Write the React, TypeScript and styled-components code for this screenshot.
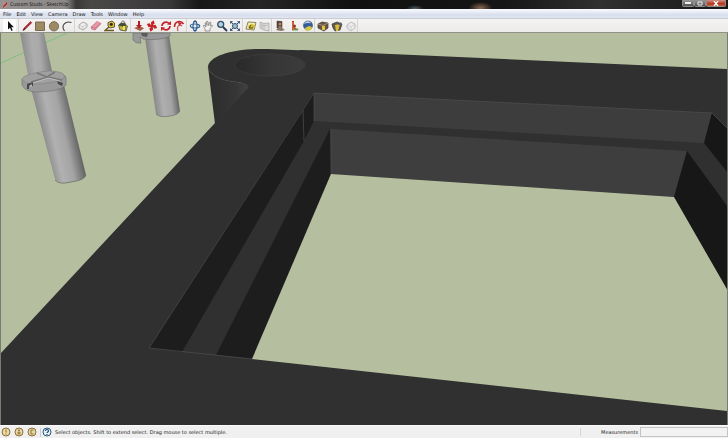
import React from "react";
import styled, { createGlobalStyle } from "styled-components";

const GlobalStyle = createGlobalStyle`
  html, body, #root { height: 100%; margin: 0; }
  body { overflow: hidden; }
  * { box-sizing: border-box; }
`;

const Window = styled.div`
  display: flex;
  flex-direction: column;
  height: 100vh;
  background: #f0f0f0;
  color: #222;
  font: 5px/8px "DejaVu Sans", "Noto Sans", sans-serif;
`;

const TitleBar = styled.header`
  display: flex;
  justify-content: space-between;
  align-items: flex-start;
  flex: 0 0 9px;
  padding-right: 2px;
  background:
    radial-gradient(ellipse 12px 6px at 66% 8px, #8a6650, transparent),
    radial-gradient(ellipse 9px 4px at 57% 9px, #53646e, transparent),
    linear-gradient(90deg, #969292 0, #8c8888 66px, #3a3838 76px, #4a4747 90px, #393838 170px, #171717 200px, #252525 260px, #111 350px, #151515 500px, #303030 600px, #171717 100%);
`;

const TitleText = styled.h1`
  display: flex;
  align-items: center;
  gap: 2px;
  margin: 0;
  padding-left: 2px;
  color: #141414;
  font-family: "Open Sans", sans-serif;
  font-size: 5px;
  font-weight: 400;
  line-height: 9px;
`;

const WindowButtons = styled.div`
  display: flex;
`;

const WindowButton = styled.button<{ $close?: boolean }>`
  display: grid;
  place-items: center;
  width: ${(p) => (p.$close ? 20 : 12)}px;
  height: 7px;
  padding: 0;
  border: 1px solid #8d8d8d;
  border-top: 0;
  border-radius: 0 0 2px 2px;
  background: ${(p) => (p.$close ? "linear-gradient(#cf9183, #b63720 60%, #cb5e43)" : "linear-gradient(#999, #505050)")};
`;

const MenuBar = styled.nav`
  display: flex;
  align-items: center;
  flex: 0 0 10px;
  gap: 5px;
  padding-left: 3px;
  border-top: 1px solid #f8f9fc;
  border-bottom: 1px solid #c9cbd3;
  background: linear-gradient(#f4f6fb, #d8deed 60%, #e0e5f0);
`;

const MenuItem = styled.button`
  padding: 0;
  border: 0;
  background: none;
  color: #111;
  font: inherit;
`;

const Toolbar = styled.div`
  display: flex;
  align-items: center;
  flex: 0 0 14px;
  padding-left: 3px;
  background: linear-gradient(#f4f3f2, #ecebea);
  border-bottom: 1px solid #91918a;
`;

const ToolGroup = styled.div<{ $width: number }>`
  display: flex;
  justify-content: space-between;
  width: ${(p) => p.$width}px;
  margin-right: 2px;
  box-shadow: 1px 0 #d4d4d2;
`;

const ToolButton = styled.button<{ $active?: boolean }>`
  display: grid;
  place-items: center;
  width: 13px;
  height: 13px;
  padding: 0;
  border: 0;
  background: ${(p) => (p.$active ? "#fdfdfd" : "none")};
`;

const Icon = styled.svg`
  display: block;
  width: 12px;
  height: 12px;
`;

const Viewport = styled.main`
  flex: 1 1 0;
  min-height: 0;
  border-right: 1px solid #777d70;
  border-left: 1px solid #777d70;
  background: #b5bf9f;
`;

const Scene = styled.svg`
  display: block;
  width: 100%;
  height: 100%;
`;

const StatusBar = styled.footer`
  display: flex;
  align-items: center;
  flex: 0 0 13px;
  gap: 3px;
  padding-left: 1px;
  border-top: 1px solid #fafafa;
  background: #f0f0f0;
`;

const StatusButton = styled.button`
  width: 10px;
  height: 10px;
  padding: 0;
  border: 0;
  background: none;

  svg { display: block; width: 10px; height: 10px; }
`;

const StatusDivider = styled.span`
  width: 1px;
  height: 9px;
  margin-right: -2px;
  background: #ccc;
`;

const StatusText = styled.span`
  flex: 1;
  border-right: 1px solid #d6d6d6;
  margin-right: 17px;
`;

const Measurements = styled.label`
  display: flex;
  align-items: center;
  gap: 2px;
`;

const MeasureInput = styled.input`
  width: 88px;
  height: 10px;
  padding: 0 2px;
  border: 1px solid #c4c4c4;
  background: #f2f2f2;
  font: inherit;
`;

type Tool = { name: string; art: React.ReactNode };

const toolGroups: { width: number; tools: Tool[] }[] = [
  { width: 15, tools: [{ name: "Select", art: <path d="M4 1v8.5l2-1.8 1.4 3.2 1.3-.6-1.4-3h2.5Z" fill="#111" /> }] },
  {
    width: 54,
    tools: [
      { name: "Line", art: <><path d="M2 10.5 3 8l6.5-6.5 1.3 1.2L4.2 9.3Z" fill="#b52332" stroke="#841822" strokeWidth=".5" /><path d="m1.5 11 1.6-2.8L4.4 9Z" fill="#35251f" /></> },
      { name: "Rectangle", art: <path d="M1.5 2h9v8.5h-9Z" fill="#9c8b62" stroke="#7b6c50" /> },
      { name: "Circle", art: <circle cx="6" cy="6.3" r="4.6" fill="#9c8b62" stroke="#7b6c50" /> },
      { name: "Arc", art: <path d="M3.5 11C-.5 5.500 4.500.5 10.500 2.500" fill="none" stroke="#444" strokeWidth="1.1" /> },
    ],
  },
  {
    width: 54,
    tools: [
      { name: "Make Component", art: <><path d="m2 5 4-3 4 2v3L6 10 2 8Z" fill="#ededed" stroke="#aaa" /><path d="m2 5 4 2 4-3M6 7v3" fill="none" stroke="#b5b5b5" strokeWidth=".6" /></> },
      { name: "Eraser", art: <><path d="m1 7 6-5.500 4 2L5 10 1.500 9Z" fill="#e697a6" stroke="#c57688" strokeWidth=".7" /><path d="m1 7 4 1.300L11 3.500M5 8.300V10" stroke="#b96479" fill="none" strokeWidth=".6" /></> },
      { name: "Tape Measure", art: <><path d="M4 2.500 8 1l2.500 2v4L6 8 4 6Z" fill="#e0c438" stroke="#403b2c" strokeWidth=".8" /><circle cx="7.300" cy="4.300" r="1.600" fill="#312f2b" /><path d="m5 7-4 3.500h9" fill="none" stroke="#6c5b20" strokeWidth="1.500" /></> },
      { name: "Paint Bucket", art: <><path d="m1.500 5 5-2 4 3-1.500 5-6-1Z" fill="#c2ba42" stroke="#514e2b" strokeWidth=".8" /><ellipse cx="5.500" cy="4.800" rx="3.500" ry="1.700" fill="#454e32" /><path d="M4 4c0-4 4-4 4 0m0 2v4" fill="none" stroke="#454545" strokeWidth=".8" /><path d="M6 6h2v4H6Z" fill="#efe260" /></> },
    ],
  },
  {
    width: 54,
    tools: [
      { name: "Push/Pull", art: <><path d="m1 8 3-1h5l2 1.500L7 11Z" fill="#a56148" /><path d="M5 1h2v4h2L6 8.500 3 5h2Z" fill="#b41d22" /></> },
      { name: "Move", art: <path d="m6 0 2 3-1 1v1l2-1 2.500 2.500L9 8 8 7H7l1 2-2 3-2-3 1-1V7L3 8 .500 5.500 3 4l1 1h1L4 3Z" fill="#c52226" transform="rotate(15 6 6)" /> },
      { name: "Rotate", art: <><path d="M2 6a4 4 0 0 1 7-2.500M10 6a4 4 0 0 1-7 2.500" fill="none" stroke="#c52327" strokeWidth="1.700" /><path d="m7 4.500 4 .5V1ZM5 7.500 1 7v4Z" fill="#c52327" /></> },
      { name: "Offset", art: <><path d="M1.500 7C1.500 1 8 0 10.500 4" fill="none" stroke="#bb2428" strokeWidth="1.600" /><path d="M5 11c-2-5 2-7 4-5" fill="none" stroke="#c75d53" strokeWidth="1.200" /><path d="m5 2 4 1-3 3Z" fill="#c52226" /></> },
    ],
  },
  {
    width: 54,
    tools: [
      { name: "Orbit", art: <><ellipse cx="6" cy="6" rx="4.700" ry="2" fill="none" stroke="#326992" strokeWidth="1.200" /><ellipse cx="6" cy="6" rx="2" ry="4.700" fill="none" stroke="#315e9b" strokeWidth="1.200" /><path d="m6 0 2 2H4Zm0 12 2-2H4Z" fill="#245790" /></> },
      { name: "Pan", art: <path d="M3 11C4 8 0 6 2 5l2 2-1-4 1-.5 1 3-.3-4h1.300l.5 4L8 2l1 .5L8 6l2-1 .5 1L8 8.500V11Z" fill="#f5f0e9" stroke="#777" strokeWidth=".7" /> },
      { name: "Zoom", art: <><circle cx="4.700" cy="4.300" r="3" fill="#afd0dc" stroke="#334f69" strokeWidth="1.300" /><path d="m7 7 4 4" stroke="#26364a" strokeWidth="1.800" /></> },
      { name: "Zoom Extents", art: <><circle cx="6" cy="6" r="2.500" fill="#9dbccc" stroke="#36546d" /><path d="m1 1 3 .5L1.500 4ZM11 1l-3 .5L10.500 4ZM1 11l3-.5L1.500 8ZM11 11l-3-.5L10.500 8Z" fill="#263f61" /><path d="m2 2 2 2m6-2L8 4M2 10l2-2m6 2L8 8" stroke="#345172" /></> },
    ],
  },
  {
    width: 27,
    tools: [
      { name: "Add Location", art: <><path d="m3 2 8 .5L9 10 1 9Z" fill="#f1edb0" stroke="#6f6b3f" strokeWidth=".8" /><path d="m3 6 3-2 4 1-1 3-4 2Z" fill="#d6ba23" /><path d="m6 5-2 3h4" fill="none" stroke="#494d42" /></> },
      { name: "Toggle Terrain", art: <><path d="m1 2 4 1.500 5-.5v8l-5-1-4-2Z" fill="#ddd" stroke="#aaa" strokeWidth=".8" /><path d="m2 5 3 1 4-1M5 4v6M3 3v6" stroke="#b2b2b2" strokeWidth=".7" fill="none" /></> },
    ],
  },
  {
    width: 41,
    tools: [
      { name: "Photo Textures", art: <><path d="m3 1 5 .5v7L3 8Z" fill="#574137" stroke="#333" strokeWidth=".5" /><circle cx="6" cy="4" r="1.500" fill="#b9855d" /><path d="M4 8c0-3 4-3 4 0l3 2-4 1-5-1Z" fill="#887563" /></> },
      { name: "Get Models", art: <><path d="M4 1h2v6l5 3H4Z" fill="#bd3b2d" /><path d="M5 2v7" stroke="#df8c4a" /><path d="m5 9 5-.5v2H4Z" fill="#6e9c4b" /><circle cx="6.500" cy="6" r="1.500" fill="#8a3b27" /></> },
      { name: "Preview in Google Earth", art: <><circle cx="6" cy="5.500" r="4.500" fill="#345b9e" stroke="#33435b" strokeWidth=".6" /><path d="M2 4c3-2 6 0 7-1L7 1.500C5 1 3 2 2 4Z" fill="#c0d4e7" /><path d="m3 8 4-2 3 1-1 3-5 1Z" fill="#d5c744" /></> },
    ],
  },
  {
    width: 41,
    tools: [
      { name: "Get 3D Models", art: <><path d="m1 4 4-2 6 1v5l-4 3-6-3Z" fill="#665447" stroke="#433c32" strokeWidth=".7" /><path d="m1 4 5 1.500L11 3" stroke="#ac9476" fill="none" /><path d="M5 6h3v4H5Z" fill="#e3c33e" /></> },
      { name: "Share Model", art: <><path d="m1 4 5-2 5 2-2 6-5 1-2-3Z" fill="#5f5849" stroke="#373a3e" strokeWidth=".7" /><path d="m4 5 5-1-2 7H5Z" fill="#dbbd39" /><path d="m7 5 3-3 1 3Z" fill="#54616c" /></> },
      { name: "Share Component", art: <><path d="m2 5 4-3 4 2v4l-4 3-4-3Z" fill="#ececec" stroke="#bbb" /><path d="m2 5 4 2 4-3M6 7v4" fill="none" stroke="#c2c2c2" strokeWidth=".6" /></> },
    ],
  },
];

const menus = ["File", "Edit", "View", "Camera", "Draw", "Tools", "Window", "Help"];

const statusMarks = [
  { name: "Geo-location", art: <path d="M5 2.500v3M5 6.500v1" stroke="#8c7136" strokeWidth="1" /> },
  { name: "Credits", art: <><circle cx="5" cy="3.500" r="1" fill="#8c7136" /><path d="M3.500 7.500V5h3v2.500Z" fill="#a6894b" /></> },
  { name: "Sign in", art: <path d="M6.500 3H4v4h2.500" fill="none" stroke="#8c7136" /> },
];

function ModelScene() {
  return (
    <Scene viewBox="1 33 726 392" preserveAspectRatio="xMidYMid slice" role="img" aria-label="Custom studs model">
      <defs>
        <linearGradient id="shaft" x1="0" y1=".15" x2="1" y2="0">
          <stop offset="0" stopColor="#898989" />
          <stop offset=".35" stopColor="#adadad" />
          <stop offset=".55" stopColor="#a9a9a9" />
          <stop offset="1" stopColor="#646464" />
        </linearGradient>
        <linearGradient id="lower-shaft" gradientUnits="userSpaceOnUse" x1="43" y1="135" x2="75" y2="128">
          <stop offset="0" stopColor="#8e8e8e" />
          <stop offset=".3" stopColor="#b1b1b1" />
          <stop offset=".65" stopColor="#a4a4a4" />
          <stop offset="1" stopColor="#656565" />
        </linearGradient>
        <linearGradient id="rear-shaft" gradientUnits="userSpaceOnUse" x1="151" y1="78" x2="175" y2="75">
          <stop offset="0" stopColor="#888" />
          <stop offset=".35" stopColor="#afafaf" />
          <stop offset=".7" stopColor="#a4a4a4" />
          <stop offset="1" stopColor="#696969" />
        </linearGradient>
        <linearGradient id="hole"><stop stopColor="#292929" /><stop offset=".55" stopColor="#373737" /><stop offset="1" stopColor="#3b3b3b" /></linearGradient>
        <linearGradient id="boss"><stop stopColor="#2b2b2b" /><stop offset=".7" stopColor="#363636" /><stop offset="1" stopColor="#414141" /></linearGradient>
      </defs>
      <path d="M1 63 67 33" stroke="#7fbd80" strokeWidth="1" />
      <path d="M20 33h24l9 43-24 4Z" fill="url(#shaft)" />
      <path d="M31 89 55 179q2 5 16 3 14-2 15-7L64 85Z" fill="url(#lower-shaft)" />
      <path d="M55 180q4 5 16 2 14-2 15-7" fill="none" stroke="#6b6b6b" strokeWidth=".8" />
      <path d="M22 79v6q3 7 15 7 21 0 29-7v-8l-3-3Z" fill="#999" stroke="#707070" strokeWidth=".6" />
      <path d="M22 80q-1-4 13-7 17-4 27 0 8 6-8 9-26 5-32-2Z" fill="#a0a0a0" stroke="#808080" strokeWidth=".6" />
      <path d="m31 82 17-5 14 3M37 73l10 4 8-5" fill="none" stroke="#777" strokeWidth="1.500" />
      <path d="m33 83 15-5 12 3" fill="none" stroke="#c3c3c3" strokeWidth=".8" />
      <path d="m27 84 6-2v4h-4v3h-2Zm30-3 6 2-1 3-4-2Z" fill="#484848" />
      <path d="m29 86 3-2v3Z" fill="#b8b8b8" />
      <path d="M145 38l11 76q4 4 14 2 8-1 10-5L169 35Z" fill="url(#rear-shaft)" />
      <path d="M156 114q4 4 14 2 8-1 10-5" fill="none" stroke="#777" strokeWidth=".8" />
      <path d="M133 33v7q3 4 8 3l-1-6 3 2q17 2 27-3v-3Z" fill="#999" stroke="#737373" strokeWidth=".7" />
      <path d="M141 33h7l-1 4-5-1Z" fill="#5b5b5b" />
      <path d="M1 353 215 123 250 82 300 50 728 69V425H1Z" fill="#303030" />
      <path d="M208 67c2 9 15 14 29 15 7 1 14 4 10 7L215 124Z" fill="url(#boss)" />
      <path d="M208 67c1-12 28-19 60-18l50 2-20 55-51-17c4-3-3-6-10-7-14-1-27-6-29-15Z" fill="#303030" />
      <path d="M208 67c2 9 15 14 29 15 7 1 14 4 10 7" fill="none" stroke="#444" strokeWidth=".6" />
      <ellipse cx="270" cy="65" rx="35" ry="11" fill="url(#hole)" stroke="#444" strokeWidth=".5" />
      <path d="M314 93 712 113 704 143 314 121Z" fill="#3d3d3d" />
      <path d="M312 95 149 348 182 352 304 141 314 121V93Z" fill="#1d1d1d" />
      <path d="M331 129 687 151 674 197 331 174Z" fill="#3e3e3e" />
      <path d="M330 129 216 355 252 359 331 174Z" fill="#1d1d1d" />
      <path d="M712 113 728 129V173L704 143Z" fill="#171717" />
      <path d="M687 151 728 207V291L674 197Z" fill="#171717" />
      <path d="M331 174 674 197 728 291V411L252 359Z" fill="#b5bf9f" />
      <path d="M149 348 314 93 712 113 728 129M149 348 252 359M304 141l-1-31m11-17v28m17 8v45" fill="none" stroke="#4f4f4f" strokeWidth=".7" />
    </Scene>
  );
}

export default function App() {
  return (
    <>
      <GlobalStyle />
      <Window>
        <TitleBar>
          <TitleText>
            <svg width="6" height="8" viewBox="0 0 6 8" aria-hidden="true"><path d="M1 1h4v6H1Z" fill="#b68c84" /><path d="m1 7 .5-2L5 1v2L2 6Z" fill="#a31820" /></svg>
            Custom Studs - SketchUp
          </TitleText>
          <WindowButtons>
            <WindowButton aria-label="Minimize"><svg width="6" height="4"><path d="M0 1h6v2H0Z" fill="#eee" /></svg></WindowButton>
            <WindowButton aria-label="Restore"><svg width="6" height="5"><path d="M1 1h4v3H1Z" fill="none" stroke="#eee" /></svg></WindowButton>
            <WindowButton $close aria-label="Close"><svg width="6" height="5"><path d="m1 0 4 5m0-5L1 5" stroke="#fff" strokeWidth="1.300" /></svg></WindowButton>
          </WindowButtons>
        </TitleBar>
        <MenuBar aria-label="Main menu">
          {menus.map((menu) => <MenuItem key={menu}>{menu}</MenuItem>)}
        </MenuBar>
        <Toolbar role="toolbar" aria-label="Getting started">
          {toolGroups.map((group) => (
            <ToolGroup key={group.tools[0].name} $width={group.width}>
              {group.tools.map((tool) => (
                <ToolButton key={tool.name} $active={tool.name === "Select"} aria-label={tool.name}>
                  <Icon viewBox="0 0 12 12" aria-hidden="true">{tool.art}</Icon>
                </ToolButton>
              ))}
            </ToolGroup>
          ))}
        </Toolbar>
        <Viewport><ModelScene /></Viewport>
        <StatusBar>
          {statusMarks.map((mark) => (
            <StatusButton key={mark.name} aria-label={mark.name}>
              <svg viewBox="0 0 10 10" aria-hidden="true"><circle cx="5" cy="5" r="4" fill="#e8d8a8" stroke="#8c7136" />{mark.art}</svg>
            </StatusButton>
          ))}
          <StatusDivider />
          <StatusButton aria-label="Help">
            <svg viewBox="0 0 10 10" aria-hidden="true"><circle cx="5" cy="5" r="4" fill="#e7f0f6" stroke="#28597e" /><path d="M3.500 4c0-2 3-2 3 0 0 1-1.500 1-1.500 2M5 7v1" fill="none" stroke="#17466b" strokeWidth="1.100" /></svg>
          </StatusButton>
          <StatusText>Select objects. Shift to extend select. Drag mouse to select multiple.</StatusText>
          <Measurements>Measurements <MeasureInput aria-label="Measurements" /></Measurements>
        </StatusBar>
      </Window>
    </>
  );
}
